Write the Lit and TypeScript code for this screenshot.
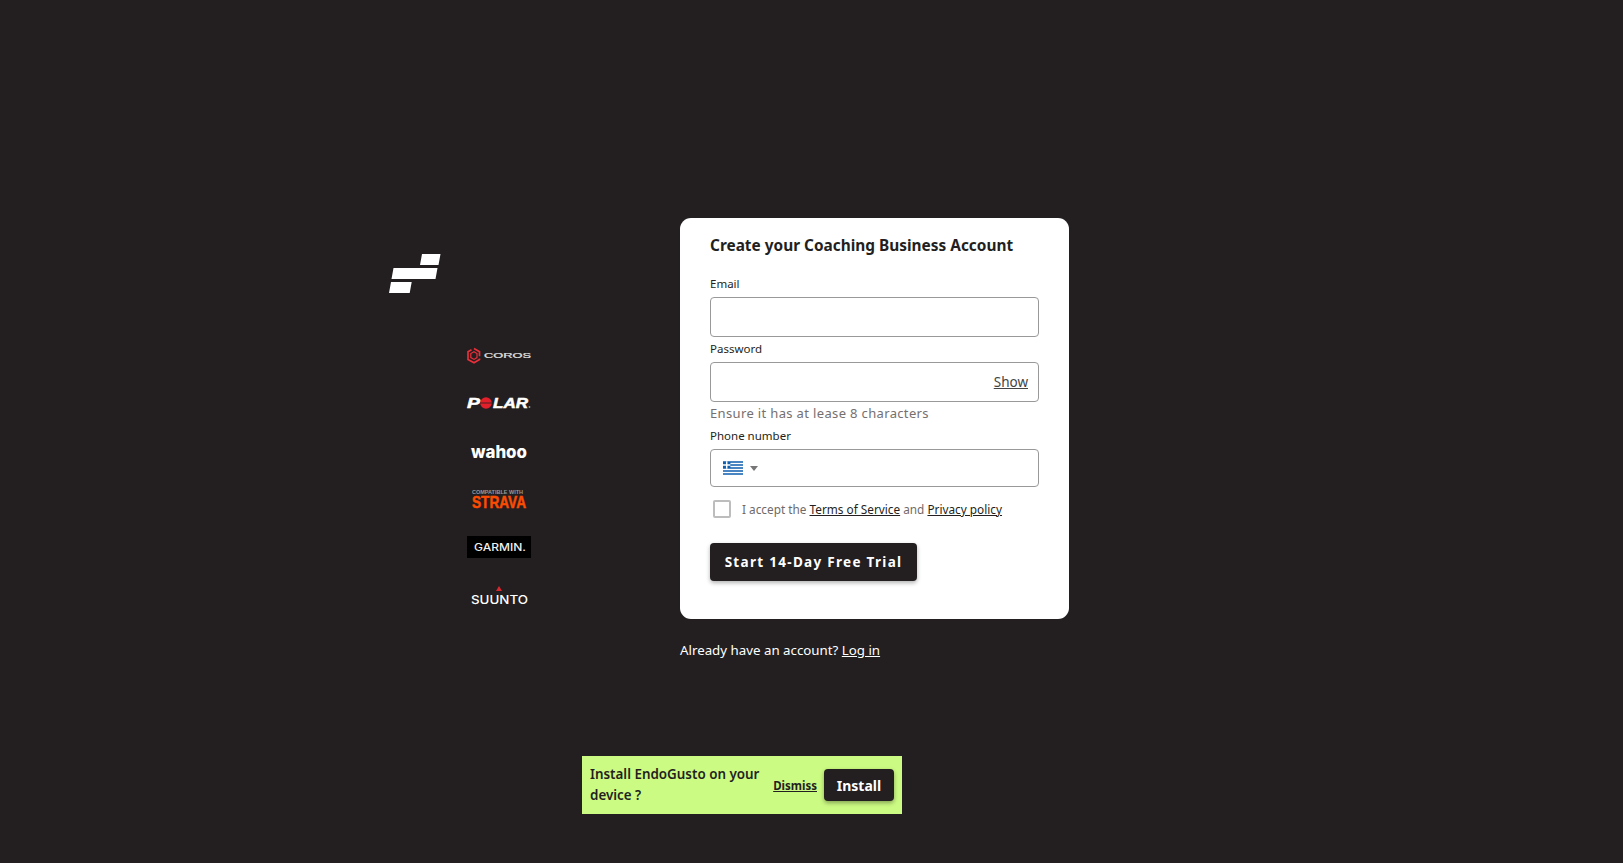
import { LitElement, css, html } from "lit";
import { customElement } from "lit/decorators.js";

@customElement("app-root")
export class AppRoot extends LitElement {
  static styles = css`
    :host {
      display: block;
      min-height: 863px;
      background: #231f20;
      font-family: "Noto Sans", "Liberation Sans", sans-serif;
      color: #231f20;
    }

    * {
      box-sizing: border-box;
    }

    .page {
      display: flex;
      align-items: flex-start;
      padding: 218px 0 0 389px;
    }

    .side {
      width: 291px;
      padding-top: 36px;
    }

    .brand {
      display: block;
      width: 52px;
      height: 39px;
    }

    .partners {
      display: flex;
      flex-direction: column;
      width: 64px;
      margin: 38px 0 0 78px;
    }

    .partners svg {
      display: block;
      width: 64px;
      height: 48px;
      overflow: visible;
    }

    .main {
      width: 389px;
    }

    .card {
      height: 401px;
      padding: 17px 30px 0;
      border-radius: 11px;
      background: #fff;
    }

    h1 {
      margin: 0 0 20px;
      font-size: 15.4px;
      line-height: 21px;
      font-weight: 700;
    }

    .label {
      display: block;
      font-size: 11.5px;
      line-height: 16px;
      margin-bottom: 5px;
    }

    .input {
      display: flex;
      align-items: center;
      height: 40px;
      border: 1px solid #999;
      border-radius: 4px;
      background: #fff;
    }

    .field {
      margin-bottom: 4px;
    }

    .password .input {
      justify-content: flex-end;
      padding-right: 10px;
    }

    .show {
      font-size: 13.5px;
      color: #444;
      text-decoration: underline;
    }

    .hint {
      margin: 1px 0 5px;
      font-size: 13px;
      line-height: 20px;
      color: #75706f;
      letter-spacing: 0.35px;
    }

    .phone .input {
      height: 38px;
      padding-left: 12px;
      gap: 7px;
    }

    .flag {
      display: block;
      width: 20px;
      height: 14px;
    }

    .caret {
      width: 0;
      height: 0;
      border-left: 4px solid transparent;
      border-right: 4px solid transparent;
      border-top: 5px solid #777;
    }

    .terms {
      display: flex;
      align-items: center;
      margin: 13px 0 0 3px;
      font-size: 11.8px;
      line-height: 18px;
      color: #6f6a69;
    }

    .box {
      width: 18px;
      height: 18px;
      margin-right: 11px;
      border: 2px solid #bdbdbd;
      border-radius: 2px;
    }

    .terms a {
      color: #231f20;
      text-decoration: underline;
    }

    .cta {
      display: block;
      width: 207px;
      height: 38px;
      margin-top: 25px;
      border: 0;
      border-radius: 4px;
      background: #231f20;
      box-shadow: 0 2px 4px rgba(0, 0, 0, 0.3);
      color: #fff;
      font: inherit;
      font-size: 13.5px;
      font-weight: 700;
      letter-spacing: 1.3px;
    }

    .login {
      margin: 21px 0 0;
      font-size: 13.3px;
      line-height: 20px;
      color: #fff;
    }

    .login a {
      color: #fff;
      text-decoration: underline;
    }

    .install {
      position: fixed;
      left: 582px;
      top: 756px;
      display: flex;
      align-items: center;
      width: 320px;
      height: 58px;
      padding: 0 8px;
      background: #ccfb83;
    }

    .install p {
      flex: 1;
      margin: 0;
      font-size: 13.4px;
      line-height: 21px;
      font-weight: 600;
    }

    .dismiss {
      margin-right: 7px;
      font-size: 11.5px;
      font-weight: 700;
      text-decoration: underline;
    }

    .install button {
      flex: none;
      width: 70px;
      height: 32px;
      border: 0;
      border-radius: 4px;
      background: #231f20;
      box-shadow: 0 2px 4px rgba(0, 0, 0, 0.35);
      color: #fff;
      font: inherit;
      font-size: 14px;
      font-weight: 700;
    }
  `;

  render() {
    return html`
      <div class="page">
        <div class="side">
          <svg class="brand" viewBox="0 0 52 39" aria-label="EndoGusto">
            <path fill="#fff" d="M33 0h18.500l-2 11H31zM4.500 14h44l-2 11H2.500zM2 28h20.700l-2 11H0z" />
          </svg>
          <div class="partners">
            <svg viewBox="0 0 64 48" aria-label="Coros">
              <path fill="none" stroke="#e8303a" stroke-width="1.700" d="M7 17.500l5.500 3.200v4.500M12.500 27.500v1l-5.500 3.200-6-3.300v-7.700l3.500-2" />
              <path fill="none" stroke="#e8303a" stroke-width="1.200" d="M7 20.800l3 1.800v4l-3 1.800-3.200-1.800v-4z" />
              <text x="17" y="26.500" textLength="47" lengthAdjust="spacingAndGlyphs" fill="#e6e6e6" stroke="#e6e6e6" stroke-width="0.200" font-family="Liberation Sans" font-size="7">COROS</text>
            </svg>
            <svg viewBox="0 0 64 48" aria-label="Polar">
              <text x="0" y="28.500" textLength="13" lengthAdjust="spacingAndGlyphs" fill="#fff" stroke="#fff" stroke-width="0.500" font-family="Liberation Sans" font-weight="700" font-style="italic" font-size="14">P</text>
              <circle cx="19" cy="24" r="5.800" fill="#e2202c" />
              <path stroke="#231f20" stroke-width="0.800" d="M13 24h12" />
              <text x="26" y="28.500" textLength="35" lengthAdjust="spacingAndGlyphs" fill="#fff" stroke="#fff" stroke-width="0.500" font-family="Liberation Sans" font-weight="700" font-style="italic" font-size="14">LAR</text>
              <circle cx="62.500" cy="28" r="0.900" fill="#999" />
            </svg>
            <svg viewBox="0 0 64 48" aria-label="Wahoo">
              <text x="4" y="31" textLength="56" lengthAdjust="spacingAndGlyphs" fill="#fff" font-family="Inter" font-weight="800" font-size="17">wahoo</text>
            </svg>
            <svg viewBox="0 0 64 48" aria-label="Compatible with Strava">
              <text x="5" y="19" textLength="51" lengthAdjust="spacingAndGlyphs" fill="#9a9a9a" font-family="Liberation Sans" font-weight="700" font-size="4.500">COMPATIBLE WITH</text>
              <text x="5" y="33" textLength="54" lengthAdjust="spacingAndGlyphs" fill="#fc4c02" stroke="#fc4c02" stroke-width="0.500" font-family="Liberation Sans" font-weight="700" font-size="16.500">STRAVA</text>
            </svg>
            <svg viewBox="0 0 64 48" aria-label="Garmin">
              <rect x="0" y="13" width="64" height="22" fill="#000" />
              <text x="7" y="28" textLength="52" lengthAdjust="spacingAndGlyphs" fill="#f0f0f0" font-family="Inter" font-weight="500" font-size="10">GARMIN.</text>
            </svg>
            <svg viewBox="0 0 64 48" aria-label="Suunto">
              <path fill="#d9272e" d="M32 15l3 5h-6z" />
              <text x="4" y="33" textLength="57" lengthAdjust="spacingAndGlyphs" fill="#fff" font-family="Inter" font-weight="500" font-size="11.500">SUUNTO</text>
            </svg>
          </div>
        </div>
        <div class="main">
          <div class="card">
            <h1>Create your Coaching Business Account</h1>
            <div class="field">
              <span class="label">Email</span>
              <div class="input"></div>
            </div>
            <div class="field password">
              <span class="label">Password</span>
              <div class="input"><span class="show">Show</span></div>
              <div class="hint">Ensure it has at lease 8 characters</div>
            </div>
            <div class="field phone">
              <span class="label">Phone number</span>
              <div class="input">
                <svg class="flag" viewBox="0 0 27 18">
                  <rect width="27" height="18" fill="#fff" />
                  <path fill="#0d5eaf" d="M0 0h27v2H0zM10 4h17v2H10zM10 8h17v2H10zM0 12h27v2H0zM0 16h27v2H0zM0 0h10v10H0z" />
                  <path fill="#fff" d="M4 0h2v10H4zM0 4h10v2H0z" />
                </svg>
                <span class="caret"></span>
              </div>
            </div>
            <div class="terms">
              <span class="box"></span>
              <span>I accept the <a>Terms of Service</a> and <a>Privacy policy</a></span>
            </div>
            <button class="cta">Start 14-Day Free Trial</button>
          </div>
          <p class="login">Already have an account? <a>Log in</a></p>
        </div>
      </div>
      <div class="install">
        <p>Install EndoGusto on your device ?</p>
        <span class="dismiss">Dismiss</span>
        <button>Install</button>
      </div>
    `;
  }
}
